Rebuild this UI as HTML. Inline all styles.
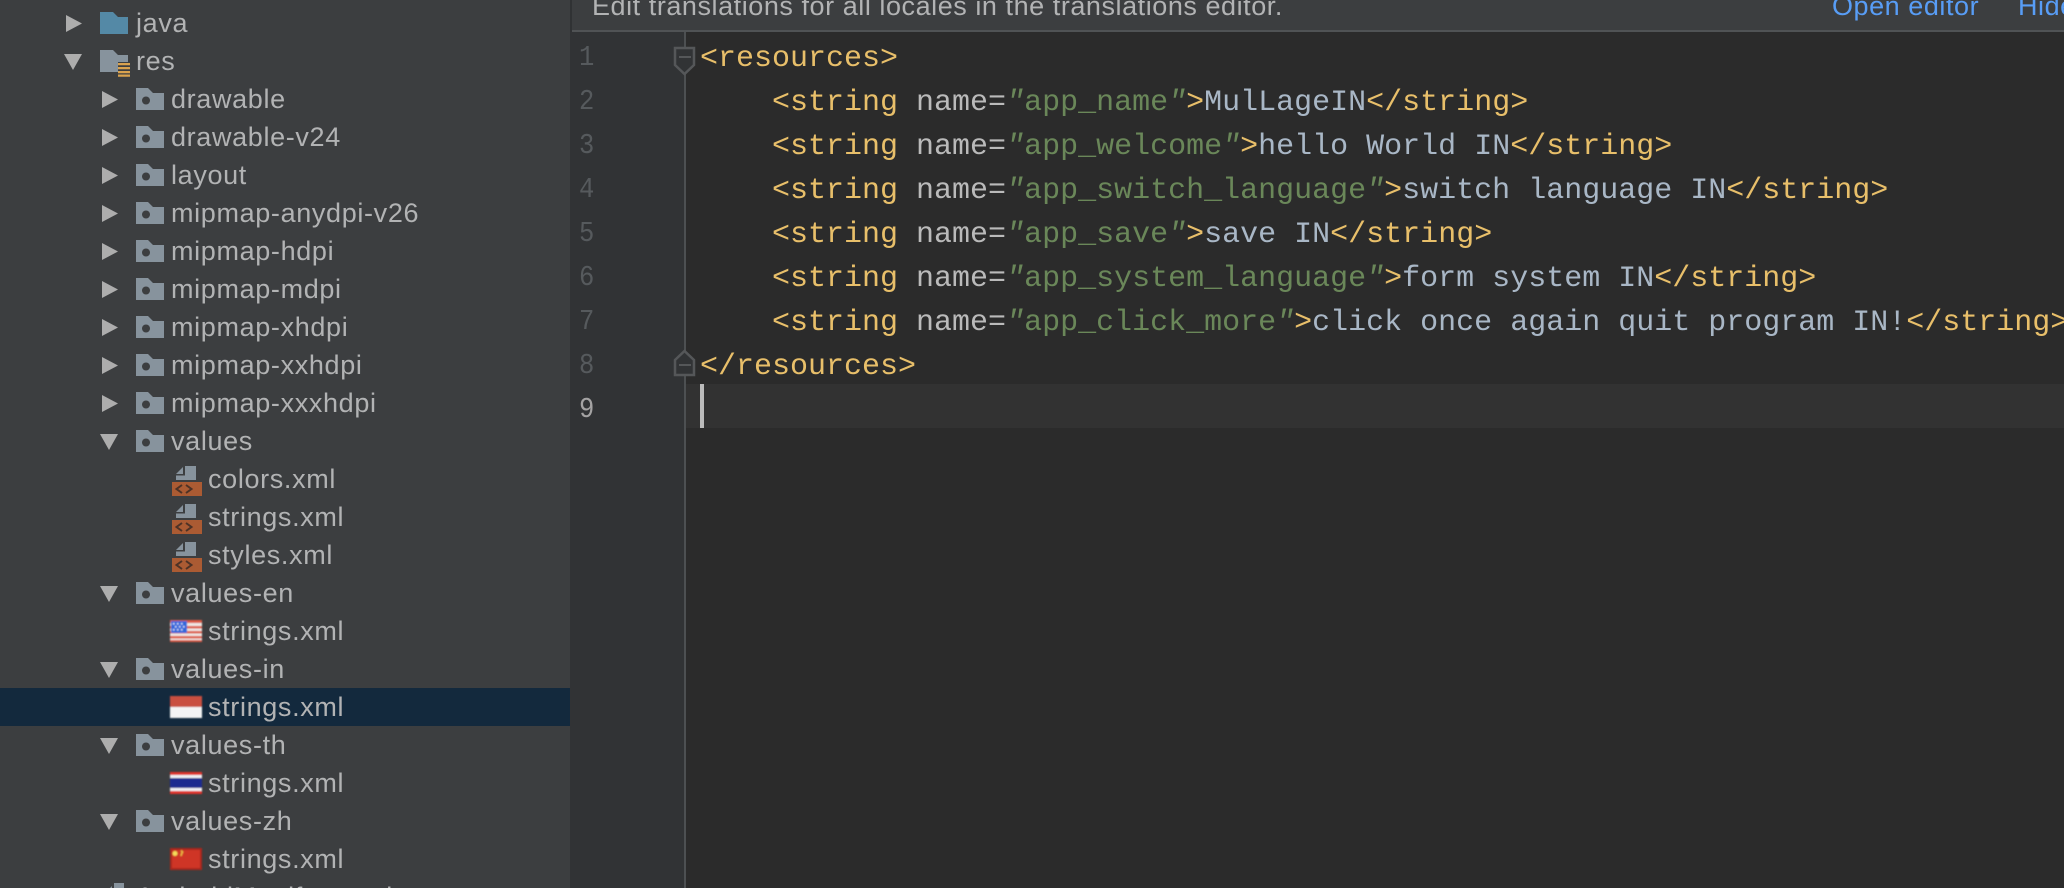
<!DOCTYPE html>
<html><head><meta charset="utf-8">
<style>
html,body{margin:0;padding:0;background:#2b2b2b}
#p{position:relative;width:2064px;height:888px;overflow:hidden;background:#2b2b2b}
#side{position:absolute;left:0;top:0;width:570px;height:888px;background:#3c3e40;overflow:hidden}
#sel{position:absolute;left:0;top:688px;width:570px;height:38px;background:#13293d}
.t{position:absolute;font:27px/38px "Liberation Sans",sans-serif;letter-spacing:.65px;color:#b2b3b4;white-space:pre}
#gut{position:absolute;left:570px;top:0;width:116px;height:888px;background:#313335}
#bar{position:absolute;left:572px;top:0;width:1492px;height:30px;background:#3c3e40;border-bottom:2px solid #505355;overflow:hidden}
#div{position:absolute;left:570px;top:0;width:2px;height:32px;background:#303234}
#cur{position:absolute;left:686px;top:384px;width:1378px;height:44px;background:#323232}
#caret{position:absolute;left:700px;top:384px;width:4px;height:44px;background:#bbb}
.b{position:absolute;top:-9px;font:27px/30px "Liberation Sans",sans-serif;letter-spacing:.55px;color:#b2b3b4;white-space:pre}
.c{position:absolute;left:700px;font:30px/44px "Liberation Mono",monospace;color:#e8bf6a;white-space:pre}
.n{position:absolute;left:579px;font:29px/44px "Liberation Mono",monospace;color:#565a5d;transform:scaleX(.88);transform-origin:0 0}
u{text-decoration:none;color:#bababa}s{text-decoration:none;color:#6a8759}b{font-weight:400;color:#a9b7c6}i{color:#6a8759}
svg{position:absolute;left:0;top:0}
</style></head><body><div id="p">
<div id="side">
<div id="sel"></div>
<svg width="570" height="888">
<defs>
<path id="ar" d="M0 0L16 8.5L0 17Z" fill="#adadad"/>
<path id="ad" d="M0 0H18L9 16Z" fill="#adadad"/>
<g id="fo"><path d="M0 0H12L17 5H28V22H0Z" fill="#87939d"/><circle cx="10" cy="12.5" r="4" fill="#3c3e40"/></g>
<g id="xm"><path d="M4 8L11 1V8Z" fill="#87939d"/><path d="M13 0H24V14H4V9.500H13Z" fill="#87939d"/><rect x="0" y="16" width="30" height="14" fill="#ab5b33"/><path d="M10 19L4.500 23L10 27M14 19L19.500 23L14 27" fill="none" stroke="#4d3226" stroke-width="2"/></g>
<filter id="bl" x="-5%" y="-5%" width="110%" height="110%"><feGaussianBlur stdDeviation=".8"/></filter>
</defs>
<use href="#ar" x="66" y="15"/>
<path d="M100 12H113L118 17H128V34H100Z" fill="#5489a6"/>
<use href="#ad" x="64" y="54"/>
<path d="M100 50H113L118 55H128V72H100Z" fill="#87939d"/>
<path d="M118 62H130V76H118Z" fill="#3c3e40"/>
<path d="M118 63h12v2.200h-12zM118 67h12v2.200h-12zM118 71h12v2.200h-12zM118 74.500h12v2.200h-12z" fill="#d9a24e"/>
<use href="#ar" x="102" y="91"/><use href="#fo" x="136" y="88"/>
<use href="#ar" x="102" y="129"/><use href="#fo" x="136" y="126"/>
<use href="#ar" x="102" y="167"/><use href="#fo" x="136" y="164"/>
<use href="#ar" x="102" y="205"/><use href="#fo" x="136" y="202"/>
<use href="#ar" x="102" y="243"/><use href="#fo" x="136" y="240"/>
<use href="#ar" x="102" y="281"/><use href="#fo" x="136" y="278"/>
<use href="#ar" x="102" y="319"/><use href="#fo" x="136" y="316"/>
<use href="#ar" x="102" y="357"/><use href="#fo" x="136" y="354"/>
<use href="#ar" x="102" y="395"/><use href="#fo" x="136" y="392"/>
<use href="#ad" x="100" y="434"/><use href="#fo" x="136" y="430"/>
<use href="#xm" x="172" y="466"/><use href="#xm" x="172" y="504"/><use href="#xm" x="172" y="542"/>
<use href="#ad" x="100" y="586"/><use href="#fo" x="136" y="582"/>
<use href="#ad" x="100" y="662"/><use href="#fo" x="136" y="658"/>
<use href="#ad" x="100" y="738"/><use href="#fo" x="136" y="734"/>
<use href="#ad" x="100" y="814"/><use href="#fo" x="136" y="810"/>
<g filter="url(#bl)">
<rect x="170" y="620" width="32" height="22" fill="#eee8e4"/>
<path d="M170 620h32v3h-32zM170 626h32v2.500h-32zM170 631h32v2.500h-32zM170 636h32v2.500h-32zM170 640h32v2h-32z" fill="#dd5a45"/>
<rect x="171" y="621" width="16" height="12" fill="#2f68dc"/>
<path d="M173 623h1.500v1.500h-1.500zM177 623h1.500v1.500h-1.500zM181 623h1.500v1.500h-1.500zM175 626h1.500v1.500h-1.500zM179 626h1.500v1.500h-1.500zM183 626h1.500v1.500h-1.500zM173 629h1.500v1.500h-1.500zM177 629h1.500v1.500h-1.500zM181 629h1.500v1.500h-1.500z" fill="#dfe8fa"/>
</g>
<g filter="url(#bl)">
<rect x="170" y="696" width="32" height="11" fill="#c9503f"/><rect x="170" y="707" width="32" height="11" fill="#f4f4f4"/>
</g>
<g filter="url(#bl)">
<rect x="170" y="772" width="32" height="22" fill="#e0332a"/>
<rect x="170" y="775" width="32" height="16" fill="#f1f1f4"/>
<rect x="170" y="778" width="32" height="10" fill="#1d2b8f"/>
</g>
<g filter="url(#bl)">
<rect x="170" y="848" width="32" height="22" fill="#a8261c"/>
<rect x="172" y="850" width="28" height="18" fill="#cf3527"/>
<circle cx="175" cy="853.500" r="2.500" fill="#f5dc5a"/><path d="M181 850.500l1.500 1.500-1 2-.5 2" fill="none" stroke="#ecc045" stroke-width="1.500"/>
</g>
<path d="M112 886L106 892H112ZM114 883H124V892H114Z" fill="#87939d"/>
</svg>
<div class="t" style="left:136px;top:4px">java</div>
<div class="t" style="left:136px;top:42px">res</div>
<div class="t" style="left:171px;top:80px">drawable</div>
<div class="t" style="left:171px;top:118px">drawable-v24</div>
<div class="t" style="left:171px;top:156px">layout</div>
<div class="t" style="left:171px;top:194px">mipmap-anydpi-v26</div>
<div class="t" style="left:171px;top:232px">mipmap-hdpi</div>
<div class="t" style="left:171px;top:270px">mipmap-mdpi</div>
<div class="t" style="left:171px;top:308px">mipmap-xhdpi</div>
<div class="t" style="left:171px;top:346px">mipmap-xxhdpi</div>
<div class="t" style="left:171px;top:384px">mipmap-xxxhdpi</div>
<div class="t" style="left:171px;top:422px">values</div>
<div class="t" style="left:208px;top:460px">colors.xml</div>
<div class="t" style="left:208px;top:498px">strings.xml</div>
<div class="t" style="left:208px;top:536px">styles.xml</div>
<div class="t" style="left:171px;top:574px">values-en</div>
<div class="t" style="left:208px;top:612px">strings.xml</div>
<div class="t" style="left:171px;top:650px">values-in</div>
<div class="t" style="left:208px;top:688px">strings.xml</div>
<div class="t" style="left:171px;top:726px">values-th</div>
<div class="t" style="left:208px;top:764px">strings.xml</div>
<div class="t" style="left:171px;top:802px">values-zh</div>
<div class="t" style="left:208px;top:840px">strings.xml</div>
<div class="t" style="left:136px;top:878px">AndroidManifest.xml</div>
</div>
<div id="gut"></div>
<div id="cur"></div>
<div id="bar">
<div class="b" style="left:20px">Edit translations for all locales in the translations editor.</div>
<div class="b" style="left:1260px;color:#589df6">Open editor</div>
<div class="b" style="left:1446px;color:#589df6">Hide</div>
</div>
<div id="div"></div>
<svg width="2064" height="888" style="pointer-events:none">
<rect x="684" y="32" width="2" height="856" fill="#4d5052"/>
<path d="M675 48H694V65L684.500 74L675 65Z" fill="#313335" stroke="#555759" stroke-width="2.500"/>
<path d="M679 57H691" stroke="#555759" stroke-width="2"/>
<path d="M675 375H694V360L684.500 351L675 360Z" fill="#313335" stroke="#555759" stroke-width="2.500"/>
<path d="M679 365H691" stroke="#555759" stroke-width="2"/>
</svg>
<div class="n" style="top:36px">1</div>
<div class="n" style="top:80px">2</div>
<div class="n" style="top:124px">3</div>
<div class="n" style="top:168px">4</div>
<div class="n" style="top:212px">5</div>
<div class="n" style="top:256px">6</div>
<div class="n" style="top:300px">7</div>
<div class="n" style="top:344px">8</div>
<div class="n" style="top:388px;color:#a4a3a3">9</div>
<div class="c" style="top:37px">&lt;resources&gt;</div>
<div class="c" style="top:81px">    &lt;string <u>name=</u><i>"</i><s>app_name</s><i>"</i>&gt;<b>MulLageIN</b>&lt;/string&gt;</div>
<div class="c" style="top:125px">    &lt;string <u>name=</u><i>"</i><s>app_welcome</s><i>"</i>&gt;<b>hello World IN</b>&lt;/string&gt;</div>
<div class="c" style="top:169px">    &lt;string <u>name=</u><i>"</i><s>app_switch_language</s><i>"</i>&gt;<b>switch language IN</b>&lt;/string&gt;</div>
<div class="c" style="top:213px">    &lt;string <u>name=</u><i>"</i><s>app_save</s><i>"</i>&gt;<b>save IN</b>&lt;/string&gt;</div>
<div class="c" style="top:257px">    &lt;string <u>name=</u><i>"</i><s>app_system_language</s><i>"</i>&gt;<b>form system IN</b>&lt;/string&gt;</div>
<div class="c" style="top:301px">    &lt;string <u>name=</u><i>"</i><s>app_click_more</s><i>"</i>&gt;<b>click once again quit program IN!</b>&lt;/string&gt;</div>
<div class="c" style="top:345px">&lt;/resources&gt;</div>
<div id="caret"></div>
</div></body></html>
